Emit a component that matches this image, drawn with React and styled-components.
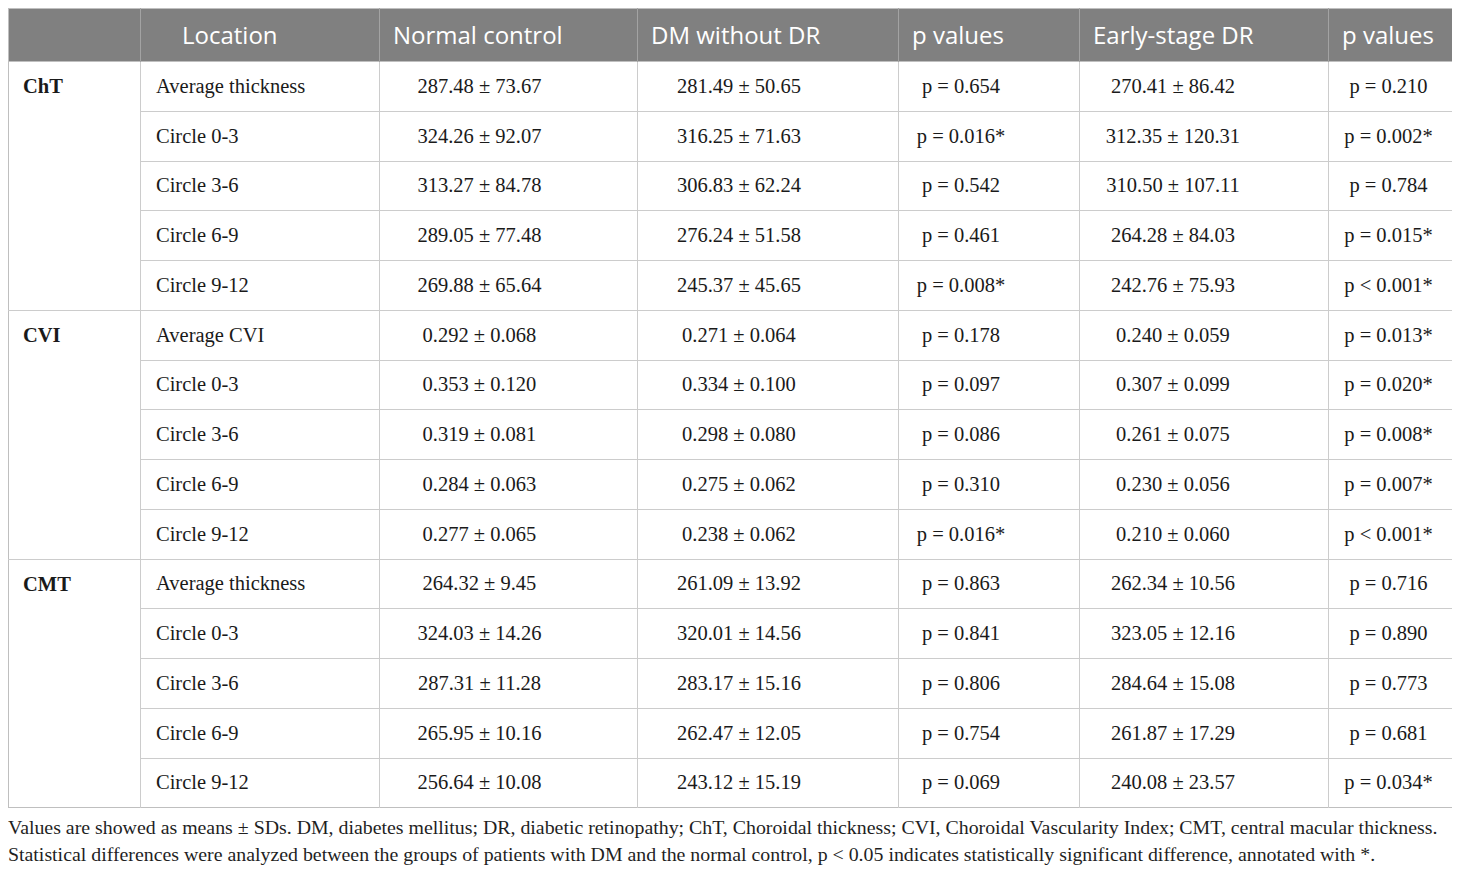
import React from 'react'
import styled, { createGlobalStyle } from 'styled-components'

const groups = [
  {
    name: 'ChT',
    rows: [
      ['Average thickness', '287.48 ± 73.67', '281.49 ± 50.65', 'p = 0.654', '270.41 ± 86.42', 'p = 0.210'],
      ['Circle 0-3', '324.26 ± 92.07', '316.25 ± 71.63', 'p = 0.016*', '312.35 ± 120.31', 'p = 0.002*'],
      ['Circle 3-6', '313.27 ± 84.78', '306.83 ± 62.24', 'p = 0.542', '310.50 ± 107.11', 'p = 0.784'],
      ['Circle 6-9', '289.05 ± 77.48', '276.24 ± 51.58', 'p = 0.461', '264.28 ± 84.03', 'p = 0.015*'],
      ['Circle 9-12', '269.88 ± 65.64', '245.37 ± 45.65', 'p = 0.008*', '242.76 ± 75.93', 'p < 0.001*'],
    ],
  },
  {
    name: 'CVI',
    rows: [
      ['Average CVI', '0.292 ± 0.068', '0.271 ± 0.064', 'p = 0.178', '0.240 ± 0.059', 'p = 0.013*'],
      ['Circle 0-3', '0.353 ± 0.120', '0.334 ± 0.100', 'p = 0.097', '0.307 ± 0.099', 'p = 0.020*'],
      ['Circle 3-6', '0.319 ± 0.081', '0.298 ± 0.080', 'p = 0.086', '0.261 ± 0.075', 'p = 0.008*'],
      ['Circle 6-9', '0.284 ± 0.063', '0.275 ± 0.062', 'p = 0.310', '0.230 ± 0.056', 'p = 0.007*'],
      ['Circle 9-12', '0.277 ± 0.065', '0.238 ± 0.062', 'p = 0.016*', '0.210 ± 0.060', 'p < 0.001*'],
    ],
  },
  {
    name: 'CMT',
    rows: [
      ['Average thickness', '264.32 ± 9.45', '261.09 ± 13.92', 'p = 0.863', '262.34 ± 10.56', 'p = 0.716'],
      ['Circle 0-3', '324.03 ± 14.26', '320.01 ± 14.56', 'p = 0.841', '323.05 ± 12.16', 'p = 0.890'],
      ['Circle 3-6', '287.31 ± 11.28', '283.17 ± 15.16', 'p = 0.806', '284.64 ± 15.08', 'p = 0.773'],
      ['Circle 6-9', '265.95 ± 10.16', '262.47 ± 12.05', 'p = 0.754', '261.87 ± 17.29', 'p = 0.681'],
      ['Circle 9-12', '256.64 ± 10.08', '243.12 ± 15.19', 'p = 0.069', '240.08 ± 23.57', 'p = 0.034*'],
    ],
  },
]

const headers = ['', 'Location', 'Normal control', 'DM without DR', 'p values', 'Early-stage DR', 'p values']
const widths = [132, 239, 258, 261, 181, 249, 124]

const GlobalStyle = createGlobalStyle`
  body {
    margin: 8px;
    background: #ffffff;
  }
`

const Wrapper = styled.div`
  width: 1444px;
`

const Table = styled.table`
  width: 1444px;
  border-collapse: collapse;
  table-layout: fixed;
  border: 1px solid #bfbfbf;
`

const HeadCell = styled.th`
  height: 50px;
  padding: 0 0 2px ${p => (p.$wide ? 41 : 13)}px;
  background: #808080;
  color: #ffffff;
  text-align: left;
  font-family: "Open Sans", sans-serif;
  font-weight: 400;
  font-size: 24px;
  border-left: 1px solid #a3a3a3;
  white-space: nowrap;
  &:first-child {
    border-left: none;
  }
`

const Row = styled.tr`
  height: 49.75px;
  border-top: 1px solid #cccccc;
  &:first-child {
    border-top: 1px solid #bfbfbf;
  }
`

const Cell = styled.td`
  padding: 0 ${p => p.$shift}px 0 ${p => p.$indent}px;
  text-align: ${p => (p.$center ? 'center' : 'left')};
  font-family: "Liberation Serif", "Times New Roman", serif;
  font-size: 20.5px;
  color: #1a1a1a;
  border-left: 1px solid #cccccc;
  white-space: nowrap;
`

const GroupCell = styled.td`
  padding: 13px 0 0 14px;
  vertical-align: top;
  font-family: "Liberation Serif", "Times New Roman", serif;
  font-size: 20.5px;
  font-weight: 700;
  color: #1a1a1a;
`

const Note = styled.p`
  margin: 6px 0 0 0;
  font-family: "Liberation Serif", "Times New Roman", serif;
  font-size: 19.85px;
  line-height: 27px;
  color: #1f1f1f;
  white-space: nowrap;
`

const shifts = [0, 58, 58, 56, 62, 4]

function App() {
  return (
    <Wrapper>
      <GlobalStyle />
      <Table>
        <colgroup>
          {widths.map((w, i) => (
            <col key={i} style={{ width: w }} />
          ))}
        </colgroup>
        <thead>
          <tr>
            {headers.map((h, i) => (
              <HeadCell key={i} $wide={i === 1}>{h}</HeadCell>
            ))}
          </tr>
        </thead>
        <tbody>
          {groups.map(g =>
            g.rows.map((r, ri) => (
              <Row key={g.name + ri}>
                {ri === 0 && <GroupCell rowSpan={g.rows.length}>{g.name}</GroupCell>}
                {r.map((v, ci) => (
                  <Cell key={ci} $center={ci > 0} $indent={ci === 0 ? 15 : 0} $shift={shifts[ci]}>
                    {v}
                  </Cell>
                ))}
              </Row>
            ))
          )}
        </tbody>
      </Table>
      <Note>
        Values are showed as means ± SDs. DM, diabetes mellitus; DR, diabetic retinopathy; ChT, Choroidal thickness; CVI, Choroidal Vascularity Index; CMT, central macular thickness.
        <br />
        Statistical differences were analyzed between the groups of patients with DM and the normal control, p &lt; 0.05 indicates statistically significant difference, annotated with *.
      </Note>
    </Wrapper>
  )
}

export default App
